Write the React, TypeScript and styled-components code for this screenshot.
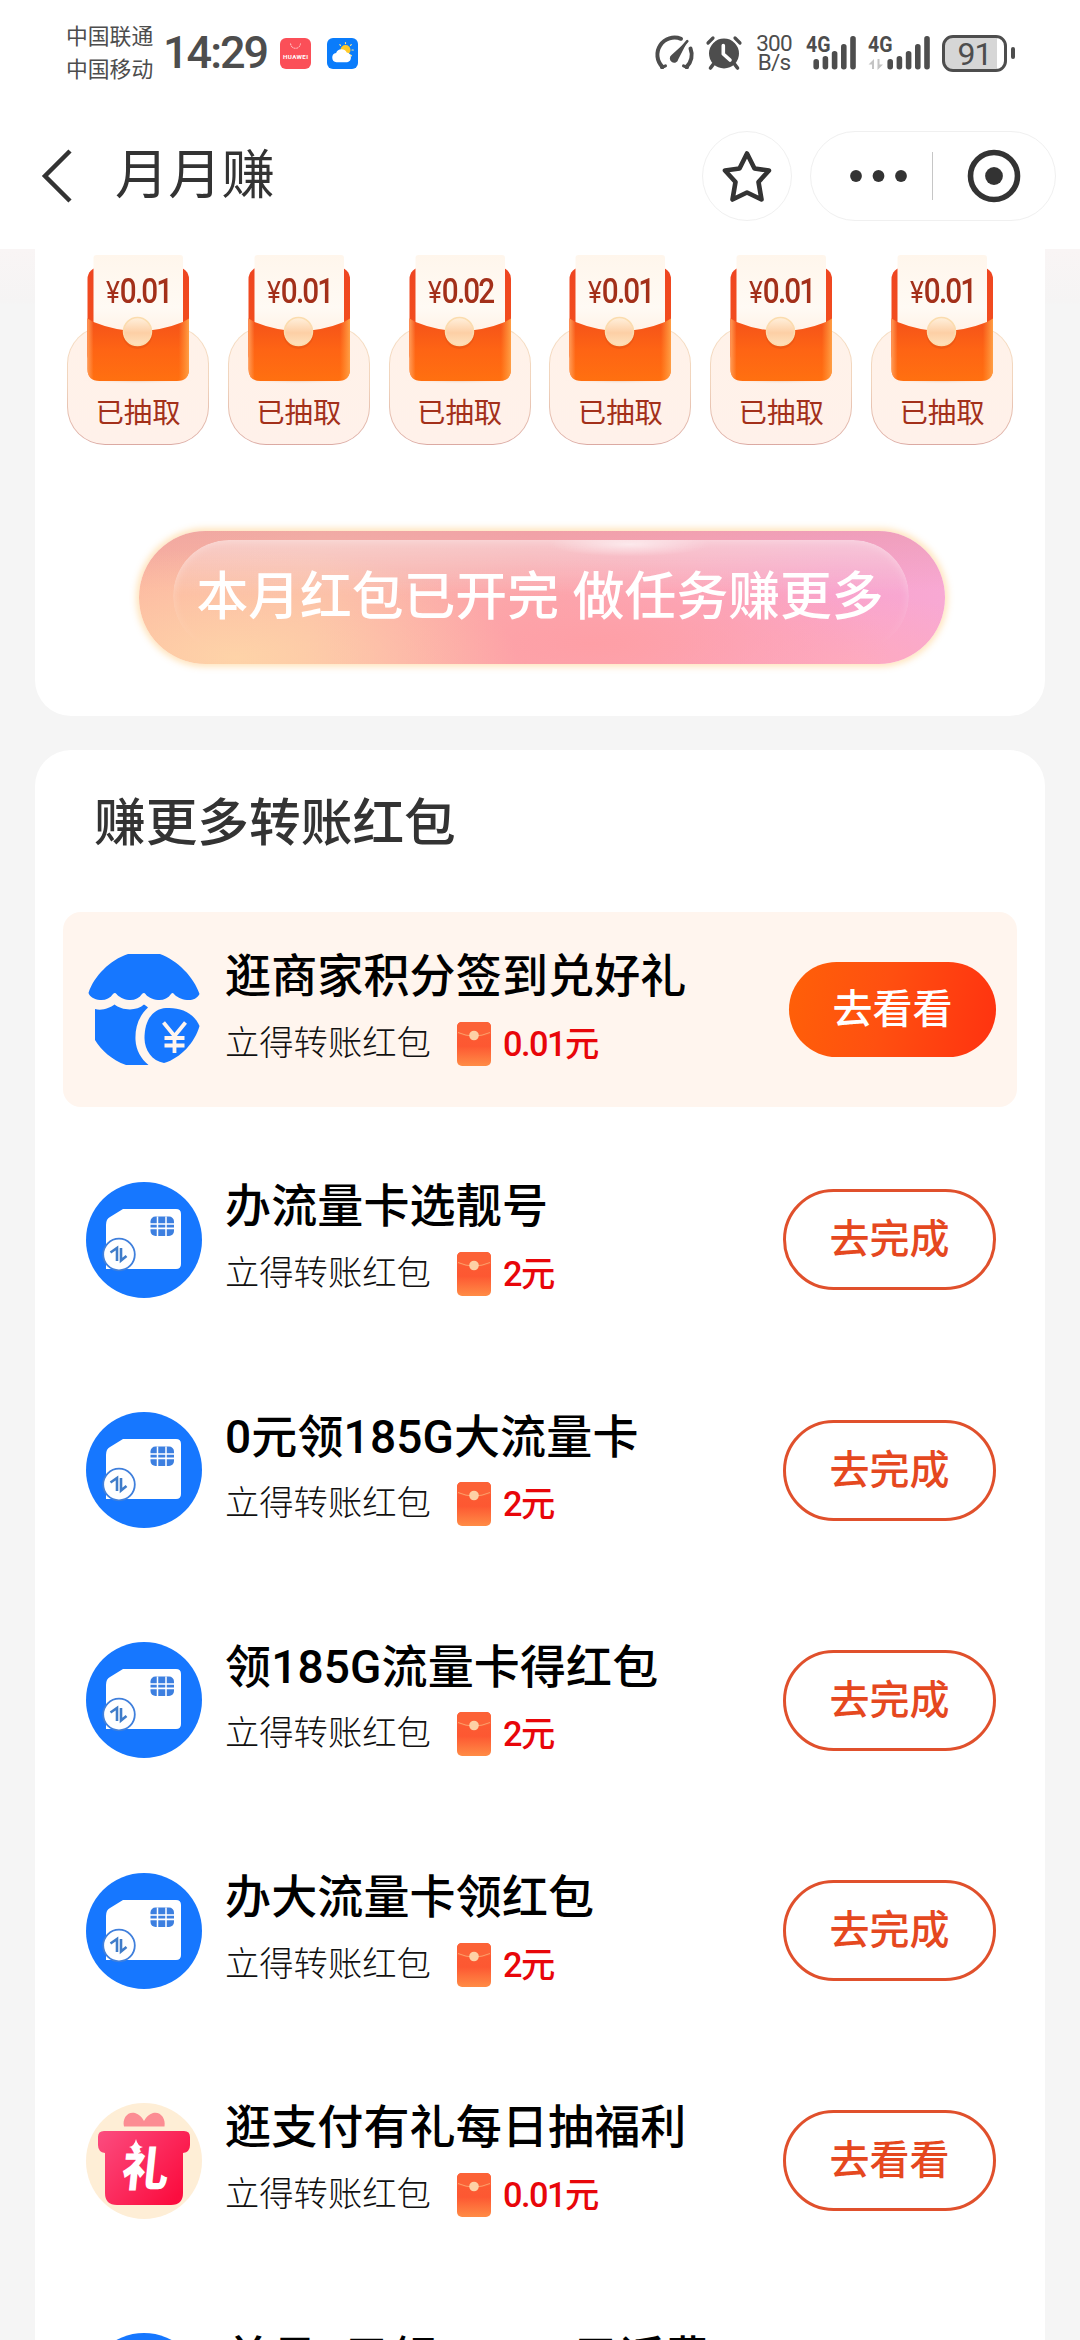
import React from "react";
import styled, { createGlobalStyle } from "styled-components";

const GlobalStyle = createGlobalStyle`
  * { box-sizing: border-box; }
  body {
    margin: 0;
    background: #f5f5f5;
    font-family: Roboto, "Noto Sans CJK SC", sans-serif;
  }
  svg { display: block; flex: none; overflow: visible; }
`;

const Page = styled.div`
  width: 1080px;
  height: 2340px;
  overflow: hidden;
  display: flex;
  flex-direction: column;
  background: #f5f5f5;
`;

const Header = styled.header`
  flex: none;
  height: 249px;
  background: #fff;
`;

/* ---------- status bar ---------- */

const StatusBar = styled.div`
  height: 106px;
  padding: 0 65px 0 66px;
  display: flex;
  align-items: center;
  color: #4d4d4d;
`;

const Carriers = styled.div`
  width: 97px;
  font-size: 21.8px;
  line-height: 33px;
  white-space: nowrap;
`;

const Clock = styled.div`
  width: 104px;
  margin-right: 13px;
  font-size: 45px;
  line-height: 44px;
  font-weight: 500;
  letter-spacing: -2px;
  white-space: nowrap;
`;

const AppBadges = styled.div`
  display: flex;
  gap: 16px;
`;

const StatusRight = styled.div`
  margin-left: auto;
  display: flex;
  align-items: center;
  gap: 12px;
`;

const NetSpeed = styled.div`
  width: 40px;
  font-size: 22.5px;
  line-height: 19.5px;
  letter-spacing: -0.8px;
  text-align: center;
`;

const BatteryGroup = styled.div`
  display: flex;
  align-items: center;
  gap: 4px;
`;

const Battery = styled.div`
  width: 65px;
  height: 37px;
  border: 3px solid #4d4d4d;
  border-radius: 11px;
  background: linear-gradient(90deg, #d6d6d6 88%, #fff 88%);
  font-size: 32px;
  line-height: 32px;
  text-align: center;
  letter-spacing: -1px;
`;

const BatteryNub = styled.div`
  width: 4px;
  height: 12px;
  border-radius: 2px;
  background: #4d4d4d;
`;

/* ---------- navigation bar ---------- */

const NavBar = styled.nav`
  height: 139px;
  padding: 0 24px 0 41px;
  display: flex;
  align-items: center;
  color: #333;
`;

const NavTitle = styled.h1`
  margin: 0 auto 0 43px;
  font-size: 53.3px;
  line-height: 60px;
  font-weight: 400;
`;

const RoundButton = styled.div`
  width: 90px;
  height: 90px;
  margin-right: 18px;
  border: 1.5px solid #f0f0f0;
  border-radius: 45px;
  display: flex;
  align-items: center;
  justify-content: center;
`;

const Capsule = styled.div`
  width: 246px;
  height: 90px;
  border: 1.5px solid #f0f0f0;
  border-radius: 45px;
  display: flex;
  align-items: center;
  padding-left: 39px;
`;

const CapsuleDivider = styled.div`
  width: 1px;
  height: 48px;
  margin: 0 35px 0 25px;
  background: #c6c6c6;
`;

/* ---------- cards ---------- */

const Content = styled.main`
  flex: 1;
  min-height: 0;
  padding: 0 35px;
  display: flex;
  flex-direction: column;
  gap: 34px;
  background: linear-gradient(#f9f5f5, #f5f4f4 54px, #f5f5f5 55px);
`;

const PacketCard = styled.section`
  flex: none;
  height: 467px;
  padding: 5px 32px 0;
  background: #fff;
  border-radius: 0 0 36px 36px;
`;

const PacketRow = styled.div`
  display: flex;
  justify-content: space-between;
`;

const Packet = styled.div`
  position: relative;
  width: 142px;
  height: 191px;
  display: flex;
  flex-direction: column;
  justify-content: flex-end;
`;

const PacketTray = styled.div`
  height: 119px;
  border: 1.5px solid transparent;
  border-radius: 38px;
  background: linear-gradient(#fff2e9, #fff1ea) padding-box,
    linear-gradient(#f7dfc3, #f0d3bc 50%, #dba9a2) border-box;
  display: flex;
  align-items: flex-end;
  justify-content: center;
  padding-bottom: 10px;
  color: #a3301a;
  font-size: 28.4px;
  line-height: 40px;
`;

const EnvelopeArt = styled.svg`
  position: absolute;
  left: 13px;
  top: 0;
`;

const PacketAmount = styled.div`
  position: absolute;
  left: 39px;
  top: 14px;
  display: flex;
  align-items: baseline;
  color: #a3301a;
  font-size: 35px;
  line-height: 48px;
  font-weight: 500;
  letter-spacing: -2.2px;
  transform: scaleX(0.85);
  transform-origin: 0 50%;
`;

const Yen = styled.span`
  font-size: 31px;
  font-weight: 400;
  letter-spacing: 0;
`;

const EarnButton = styled.div`
  position: relative;
  width: 806px;
  height: 133px;
  margin: 86px auto 0 72px;
  border-radius: 67px;
  background:
    radial-gradient(ellipse 280px 110px at 12% 95%, #fed3a8 0%, rgba(255, 208, 168, 0) 100%),
    radial-gradient(ellipse 300px 85px at 56% 85%, #fe9fa6 0%, rgba(254, 159, 166, 0) 100%),
    radial-gradient(ellipse 190px 70px at 88% 100%, #feabc0 0%, rgba(254, 171, 192, 0) 100%),
    linear-gradient(180deg, rgba(226, 150, 160, 0.42), rgba(255, 170, 180, 0) 45%),
    linear-gradient(96deg, #fcb4a0 0%, #fbb9a8 22%, #fba9ac 48%, #fca7bd 68%, #f9a4cd 86%, #f8a9d4 100%);
  box-shadow: 0 0 6px 3px rgba(255, 225, 180, 0.85);
  display: flex;
  align-items: center;
  justify-content: center;
  color: #fff;
  font-size: 51.8px;
  line-height: 60px;
  font-weight: 500;
  white-space: nowrap;
`;

const EarnGloss = styled.div`
  position: absolute;
  left: 34px;
  right: 36px;
  top: 9px;
  height: 112px;
  border-radius: 56px;
  background:
    radial-gradient(ellipse 80px 12px at 62% 4%, rgba(255, 255, 255, 0.6), rgba(255, 255, 255, 0)),
    linear-gradient(180deg, rgba(255, 255, 255, 0.42), rgba(255, 255, 255, 0) 50%);
  -webkit-mask-image: linear-gradient(#000 40%, transparent 95%);
  mask-image: linear-gradient(#000 40%, transparent 95%);
  box-shadow: inset 0 0 10px rgba(255, 255, 255, 0.35);
`;

const EarnLabel = styled.span`
  position: relative;
  left: -2px;
  word-spacing: 1px;
`;

const TaskCard = styled.section`
  flex: none;
  height: 1700px;
  padding: 39px 28px 0;
  background: #fff;
  border-radius: 36px 36px 0 0;
`;

const TaskHeading = styled.h2`
  height: 123px;
  margin: 0;
  padding-left: 31px;
  color: #333;
  font-size: 51.7px;
  line-height: 70px;
  font-weight: 500;
`;

const TaskList = styled.div`
  display: flex;
  flex-direction: column;
  gap: 35.3px;
`;

const TaskRow = styled.div<{ $highlight?: boolean }>`
  height: 195px;
  padding: 0 21px 0 23px;
  border-radius: 18px;
  background: ${(p) => (p.$highlight ? "#fff5ee" : "transparent")};
  display: flex;
  align-items: center;
`;

const TaskText = styled.div`
  flex: 1;
  padding-left: 23px;
`;

const TaskTitle = styled.div`
  color: #000;
  font-size: 46px;
  line-height: 66px;
  font-weight: 500;
  letter-spacing: 0.15px;
  white-space: nowrap;
`;

const TaskReward = styled.div`
  display: flex;
  align-items: center;
  height: 67px;
`;

const RewardLabel = styled.span`
  width: 232px;
  color: #111;
  font-size: 34.3px;
  line-height: 50px;
  font-weight: 300;
`;

const RewardAmount = styled.span`
  margin-left: 12px;
  padding-top: 2px;
  color: #e8060a;
  font-size: 34.3px;
  line-height: 50px;
  font-weight: 500;
  letter-spacing: -1.5px;
`;

const SolidButton = styled.div`
  width: 207px;
  height: 95px;
  border-radius: 48px;
  background: linear-gradient(100deg, #ff6008, #ff5010 45%, #ff3210);
  color: #fff;
  font-size: 40px;
  line-height: 95px;
  font-weight: 500;
  text-align: center;
`;

const OutlineButton = styled.div`
  width: 213px;
  height: 101px;
  border: 3px solid #e0502c;
  border-radius: 51px;
  color: #e5481f;
  font-size: 40px;
  line-height: 95px;
  font-weight: 500;
  text-align: center;
`;

/* ---------- drawings ---------- */

const HuaweiBadge = () => (
  <svg width="31" height="31" viewBox="0 0 31 31">
    <rect width="31" height="31" rx="6" fill="#fb4f58" />
    <path d="M10.5 5.5C11 9 13 10.3 15.5 10.3S20 9 20.5 5.5" fill="none" stroke="#ffd0d2" strokeWidth="1" strokeDasharray="2 0.8" />
    <text x="15.5" y="20.5" textAnchor="middle" fontSize="6.2" fontWeight="700" fill="#fff" textLength="25">HUAWEI</text>
  </svg>
);

const WeatherBadge = () => (
  <svg width="31" height="31" viewBox="0 0 31 31">
    <rect width="31" height="31" rx="6" fill="#0a7cfb" />
    <circle cx="18.5" cy="12" r="5" fill="#ffc928" />
    <g stroke="#ffe58a" strokeWidth="1.2" strokeLinecap="round">
      <path d="M18.5 5.6V4.6M13.5 7.4l-.7-.8M23.5 7.4l.8-.8M25 12h1.3M23.5 17l1 .8" />
    </g>
    <path d="M9.5 24.2a4.7 4.7 0 0 1-.4-9.3 5.8 5.8 0 0 1 10.6-.3 4.9 4.9 0 0 1 .5 9.6z" fill="#fff" />
  </svg>
);

const GaugeIcon = () => (
  <svg width="39" height="36" viewBox="0 0 39 36" fill="none" stroke="#4d4d4d" strokeWidth="4" strokeLinecap="round">
    <path d="M7.5 32A17.2 17.2 0 0 1 26 3.800" />
    <path d="M35.500 13.500A17 17 0 0 1 31.500 32" />
    <path d="M6.500 32.500L10.500 30.800M32.500 32.500L28.500 30.800" strokeWidth="3" />
    <path d="M33.300 4.800L23.300 24.300A4.300 4.300 0 1 1 16.500 20z" fill="#4d4d4d" stroke="none" />
    <path d="M32.300 6.200L24 16" strokeWidth="2.600" />
  </svg>
);

const AlarmIcon = () => (
  <svg width="36" height="36" viewBox="0 0 36 36" fill="none" stroke="#4d4d4d" strokeLinecap="round">
    <circle cx="18" cy="18.500" r="15" fill="#4d4d4d" stroke="none" />
    <path d="M2 8L7 3M34 8L29 3" strokeWidth="3.200" />
    <path d="M7.500 29L4.500 33M28.500 29L31.500 33" strokeWidth="3.600" />
    <path d="M17.300 10.500V19L24 25" stroke="#fff" strokeWidth="3.600" strokeLinejoin="round" />
  </svg>
);

const Signal = ({ arrows }: { arrows?: boolean }) => (
  <svg width={arrows ? 62 : 50} height="36" viewBox={`0 0 ${arrows ? 62 : 50} 36`}>
    <text x="0" y="17" fontSize="22" fontWeight="700" fill="#4d4d4d" textLength="24.5" lengthAdjust="spacingAndGlyphs">4G</text>
    <g transform={arrows ? "translate(12 0)" : undefined} fill="#4d4d4d">
      <rect x="7.400" y="24" width="5.600" height="10.500" rx="2.700" />
      <rect x="16.600" y="21" width="5.600" height="13.500" rx="2.700" />
      <rect x="25.800" y="16" width="5.600" height="18.500" rx="2.700" />
      <rect x="35" y="9" width="5.600" height="25.500" rx="2.700" />
      <rect x="44.200" y="1" width="5.600" height="33.500" rx="2.700" />
    </g>
    {arrows && <path d="M0.500 29.500L6 24V34H4V29.500zM15 29.500L9.500 35V24h2v5.500z" fill="#c4c4c4" />}
  </svg>
);

const BackIcon = () => (
  <svg width="31" height="54" viewBox="0 0 31 54" fill="none" stroke="#333" strokeWidth="4.500">
    <path d="M29 2L4 27L29 52" />
  </svg>
);

const StarIcon = () => (
  <svg width="50" height="54" viewBox="0 0 50 54" fill="none" stroke="#333" strokeWidth="4.600" strokeLinejoin="round">
    <path d="M25 4.500L32.500 19.500L47 21.500L36.500 33L39.500 50.500L25 43.500L10.500 50.500L13.500 33L3 21.500L17.500 19.500Z" />
  </svg>
);

const DotsIcon = () => (
  <svg width="57" height="12" viewBox="0 0 57 12" fill="#333">
    <circle cx="6" cy="6" r="5.900" />
    <circle cx="28.500" cy="6" r="5.900" />
    <circle cx="51" cy="6" r="5.900" />
  </svg>
);

const TargetIcon = () => (
  <svg width="52" height="54" viewBox="0 0 52 54">
    <circle cx="26" cy="27" r="23.500" fill="none" stroke="#333" strokeWidth="5.600" />
    <circle cx="26" cy="27" r="8.900" fill="#333" />
  </svg>
);

const Envelope = () => (
  <EnvelopeArt width="116" height="134" viewBox="0 0 116 134">
    <defs>
      <linearGradient id="envBack" x1="0" y1="0" x2="0" y2="1">
        <stop offset="0" stopColor="#ee4521" />
        <stop offset="1" stopColor="#f5521b" />
      </linearGradient>
      <linearGradient id="envPaper" x1="0" y1="0" x2="0" y2="1">
        <stop offset="0" stopColor="#fff6ec" />
        <stop offset="0.650" stopColor="#fffaf4" />
        <stop offset="1" stopColor="#fff1e4" />
      </linearGradient>
      <linearGradient id="envFront" x1="0" y1="0" x2="0" y2="1">
        <stop offset="0" stopColor="#f4511a" />
        <stop offset="0.500" stopColor="#fe6414" />
        <stop offset="1" stopColor="#ff7010" />
      </linearGradient>
      <linearGradient id="envEdge" x1="0" y1="0" x2="1" y2="0">
        <stop offset="0" stopColor="#ff9a55" />
        <stop offset="0.060" stopColor="#ff9a55" stopOpacity="0" />
        <stop offset="0.900" stopColor="#ff9a3c" stopOpacity="0" />
        <stop offset="1" stopColor="#ff9f45" />
      </linearGradient>
      <linearGradient id="envSeal" x1="0" y1="0" x2="0" y2="1">
        <stop offset="0" stopColor="#fff0dc" />
        <stop offset="0.550" stopColor="#fdcfa5" />
        <stop offset="1" stopColor="#fee2bd" />
      </linearGradient>
      <radialGradient id="envShade">
        <stop offset="0" stopColor="#e9cdbb" />
        <stop offset="1" stopColor="#fff2ea" stopOpacity="0" />
      </radialGradient>
    </defs>
    <ellipse cx="57.500" cy="126.500" rx="57" ry="3.500" fill="url(#envShade)" />
    <rect x="7.500" y="13" width="101.500" height="100" rx="12" fill="url(#envBack)" />
    <path d="M13.500 4q0-3 3-3H100q3 0 3 3V82H13.500z" fill="url(#envPaper)" />
    <path d="M7.500 64.500L13.500 68Q58 86 103 68L109 64.500V115q0 12-12 12H19.500q-12 0-12-12z" fill="url(#envFront)" />
    <path d="M7.500 64.500L13.500 68Q58 86 103 68L109 64.500V115q0 12-12 12H19.500q-12 0-12-12z" fill="url(#envEdge)" />
    <circle cx="57.500" cy="80" r="15" fill="#d94a12" opacity="0.350" />
    <circle cx="57.500" cy="77.500" r="14" fill="url(#envSeal)" stroke="#fbdcae" strokeWidth="1.500" />
  </EnvelopeArt>
);

const MiniEnvelopeArt = styled.svg`
  position: relative;
  top: 1px;
`;

const MiniEnvelope = () => (
  <MiniEnvelopeArt width="34" height="44" viewBox="0 0 34 44">
    <defs>
      <linearGradient id="miniBody" x1="0" y1="0" x2="0" y2="1">
        <stop offset="0" stopColor="#fb5c33" />
        <stop offset="0.550" stopColor="#fd5832" />
        <stop offset="1" stopColor="#ff8c46" />
      </linearGradient>
    </defs>
    <rect width="34" height="44" rx="5" fill="url(#miniBody)" />
    <path d="M0 12V5q0-5 5-5h24q5 0 5 5v7Q17 18 0 12z" fill="#fc6237" />
    <path d="M1 10.500Q17 17.500 33 10.500" fill="none" stroke="#fda06b" strokeWidth="1" />
    <circle cx="17" cy="13.500" r="4.800" fill="#fdd2a6" />
  </MiniEnvelopeArt>
);

const ShopIcon = () => (
  <svg width="116" height="116" viewBox="0 0 116 116">
    <path d="M42 2H74C91 8 108 25 113.500 42C111 47 106 48.500 101 48C95 47.500 90 44.500 88 42Q86.500 40 85 42C82 46.500 77 48.500 72 48C66 47.500 61 44.500 59.500 42Q58 40 56 42C53 46.500 48 48.500 43 48C37 47.500 32.500 44.500 30.500 42Q29 40 27 42C24 46.500 19 48.500 14 48C8 47.500 4 45 2.500 41C8 24 24 8 42 2Z" fill="#1677ff" />
    <path d="M9 57C16 59 24 56 28.500 52.500C35 58 50 60 58 52.500Q60.500 54 62 55.500C52 65 49 76 49.500 88C50 98 55 107 62.500 113H40C26 108 15 98 9 88Z" fill="#1677ff" />
    <path d="M80 56C95 55 108 61 113.500 74C109 90 95 106 78 111C66 109 58.500 98 58.500 86C58.500 69 66 57 80 56Z" fill="#1677ff" />
    <path d="M77.500 70.500L88.500 84L99.500 70.500M88.500 84V101M78.500 86H98.500M78.500 93.500H98.500" fill="none" stroke="#fff5ee" strokeWidth="3.800" />
  </svg>
);

const SimIcon = () => (
  <svg width="116" height="116" viewBox="0 0 116 116">
    <circle cx="58" cy="58" r="58" fill="#1677ff" />
    <path d="M37 27H90q5 0 5 5V82q0 5-5 5H20V43Q20 37 24 35Z" fill="#fff" />
    <rect x="64.500" y="34.500" width="23.500" height="19.500" rx="5" fill="#3c7fe0" />
    <path d="M71.500 34.500V54M80 34.500V54" stroke="#fff" strokeWidth="1.500" />
    <path d="M64 42H88.500M64 46.400H88.500" stroke="#fff" strokeWidth="1.600" />
    <circle cx="33" cy="72.500" r="15.800" fill="#fff" stroke="#3f7fdc" strokeWidth="1.800" />
    <path d="M24.500 70.500L31 66V79M35 66V78.500L40.500 74" fill="none" stroke="#3f7cc9" strokeWidth="2.600" />
  </svg>
);

const GiftGlyph = styled.text`
  font-family: "Noto Sans CJK SC", sans-serif;
  font-size: 47px;
  font-weight: 900;
  fill: #fff;
`;

const GiftIcon = () => (
  <svg width="116" height="116" viewBox="0 0 116 116">
    <defs>
      <linearGradient id="giftBox" x1="0" y1="0" x2="1" y2="0.700">
        <stop offset="0" stopColor="#fb4d80" />
        <stop offset="1" stopColor="#fb0d3f" />
      </linearGradient>
    </defs>
    <circle cx="58" cy="58" r="58" fill="#feeed6" />
    <path d="M38 23.500C36 15 42 8 49 10Q55 12 58 18Q61 12 67 10C74 8 80 15 78.500 23.500Z" fill="#fc8c93" />
    <path d="M18 28H98q6 0 6 6V42q0 7-7 8V90q0 12-12 12H31q-12 0-12-12V50q-7-1-7-8V34q0-6 6-6z" fill="url(#giftBox)" />
    <GiftGlyph x="35" y="83" transform="skewX(-6) translate(8 0)">礼</GiftGlyph>
    <path d="M50 36Q51.500 43 57 44Q51.500 45 50 52Q48.500 45 43 44Q48.500 43 50 36z" fill="#fff" />
  </svg>
);

/* ---------- page ---------- */

const AMOUNTS = ["0.01", "0.01", "0.02", "0.01", "0.01", "0.01"];

type Task = {
  icon: () => React.JSX.Element;
  title: string;
  reward: string;
  action: string;
  highlight?: boolean;
};

const TASKS: Task[] = [
  { icon: ShopIcon, title: "逛商家积分签到兑好礼", reward: "0.01元", action: "去看看", highlight: true },
  { icon: SimIcon, title: "办流量卡选靓号", reward: "2元", action: "去完成" },
  { icon: SimIcon, title: "0元领185G大流量卡", reward: "2元", action: "去完成" },
  { icon: SimIcon, title: "领185G流量卡得红包", reward: "2元", action: "去完成" },
  { icon: SimIcon, title: "办大流量卡领红包", reward: "2元", action: "去完成" },
  { icon: GiftIcon, title: "逛支付有礼每日抽福利", reward: "0.01元", action: "去看看" },
  { icon: SimIcon, title: "首月0元领185G5元话费", reward: "2元", action: "去完成" },
];

export default function App() {
  return (
    <>
      <GlobalStyle />
      <Page>
        <Header>
          <StatusBar>
            <Carriers>
              中国联通
              <br />
              中国移动
            </Carriers>
            <Clock>14:29</Clock>
            <AppBadges>
              <HuaweiBadge />
              <WeatherBadge />
            </AppBadges>
            <StatusRight>
              <GaugeIcon />
              <AlarmIcon />
              <NetSpeed>300 B/s</NetSpeed>
              <Signal />
              <Signal arrows />
              <BatteryGroup>
                <Battery>91</Battery>
                <BatteryNub />
              </BatteryGroup>
            </StatusRight>
          </StatusBar>
          <NavBar>
            <BackIcon />
            <NavTitle>月月赚</NavTitle>
            <RoundButton>
              <StarIcon />
            </RoundButton>
            <Capsule>
              <DotsIcon />
              <CapsuleDivider />
              <TargetIcon />
            </Capsule>
          </NavBar>
        </Header>
        <Content>
          <PacketCard>
            <PacketRow>
              {AMOUNTS.map((amount, i) => (
                <Packet key={i}>
                  <PacketTray>已抽取</PacketTray>
                  <Envelope />
                  <PacketAmount>
                    <Yen>¥</Yen>
                    {amount}
                  </PacketAmount>
                </Packet>
              ))}
            </PacketRow>
            <EarnButton>
              <EarnGloss />
              <EarnLabel>本月红包已开完 做任务赚更多</EarnLabel>
            </EarnButton>
          </PacketCard>
          <TaskCard>
            <TaskHeading>赚更多转账红包</TaskHeading>
            <TaskList>
              {TASKS.map(({ icon: Icon, title, reward, action, highlight }) => (
                <TaskRow key={title} $highlight={highlight}>
                  <Icon />
                  <TaskText>
                    <TaskTitle>{title}</TaskTitle>
                    <TaskReward>
                      <RewardLabel>立得转账红包</RewardLabel>
                      <MiniEnvelope />
                      <RewardAmount>{reward}</RewardAmount>
                    </TaskReward>
                  </TaskText>
                  {highlight ? <SolidButton>{action}</SolidButton> : <OutlineButton>{action}</OutlineButton>}
                </TaskRow>
              ))}
            </TaskList>
          </TaskCard>
        </Content>
      </Page>
    </>
  );
}
